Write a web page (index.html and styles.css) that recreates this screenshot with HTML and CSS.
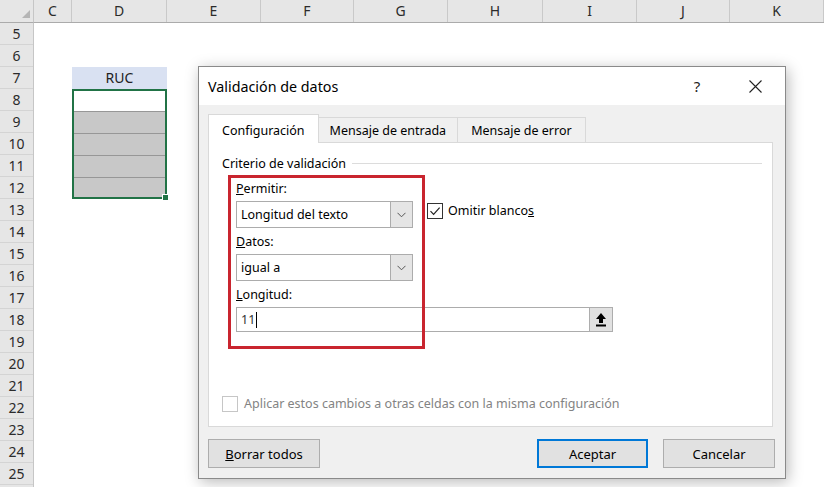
FILE: index.html
```html
<!DOCTYPE html>
<html lang="es">
<head>
  <meta charset="UTF-8">
  <title>Validación de datos</title>
  <link rel="stylesheet" href="styles.css">
</head>
<body>
<!-- hoja de cálculo de fondo -->
<div class="sheet">
  <div class="corner"><span class="corner-tri"></span></div>
  <div class="col-heads">
    <div>C</div><div>D</div><div>E</div><div>F</div><div>G</div><div>H</div><div>I</div><div>J</div><div>K</div>
  </div>
  <div class="row-heads">
    <div>5</div><div>6</div><div>7</div><div>8</div><div>9</div><div>10</div><div>11</div>
    <div>12</div><div>13</div><div>14</div><div>15</div><div>16</div><div>17</div><div>18</div>
    <div>19</div><div>20</div><div>21</div><div>22</div><div>23</div><div>24</div><div>25</div>
  </div>
  <div class="cells">
    <div class="ruc">RUC</div>
    <div class="sel">
      <div class="sel-cell first"></div>
      <div class="sel-cell"></div>
      <div class="sel-cell"></div>
      <div class="sel-cell"></div>
      <div class="sel-cell last"></div>
      <span class="handle"></span>
    </div>
  </div>
</div>

<!-- cuadro de diálogo -->
<div class="dialog">
  <div class="dlg-title">
    <span class="dlg-caption">Validación de datos</span>
    <span class="dlg-help">?</span>
    <span class="dlg-close">
      <svg width="13" height="13" viewBox="0 0 13 13"><path d="M0.5 0.5L12.5 12.5M12.5 0.5L0.5 12.5" stroke="#222" stroke-width="1.1" fill="none"/></svg>
    </span>
  </div>
  <div class="dlg-body">
    <div class="tabs">
      <div class="tab active">Configuración</div>
      <div class="tab">Mensaje de entrada</div>
      <div class="tab">Mensaje de error</div>
    </div>
    <div class="panel">
      <div class="group-head"><span>Criterio de validación</span><i class="group-line"></i></div>
      <div class="fields">
        <div class="lbl"><u>P</u>ermitir:</div>
        <div class="field-row">
          <div class="combo">
            <span class="combo-val">Longitud del texto</span>
            <span class="combo-btn"><svg width="9" height="6" viewBox="0 0 9 6"><path d="M0.5 0.8L4.5 4.8L8.5 0.8" stroke="#555" stroke-width="1" fill="none"/></svg></span>
          </div>
          <div class="check">
            <span class="box"><svg width="14" height="14" viewBox="0 0 14 14"><path d="M2.5 7.2L5.6 10.3L11.6 3.6" stroke="#222" stroke-width="1.2" fill="none"/></svg></span>
            <span>Omitir blanco<u>s</u></span>
          </div>
        </div>
        <div class="lbl"><u>D</u>atos:</div>
        <div class="combo">
          <span class="combo-val">igual a</span>
          <span class="combo-btn"><svg width="9" height="6" viewBox="0 0 9 6"><path d="M0.5 0.8L4.5 4.8L8.5 0.8" stroke="#555" stroke-width="1" fill="none"/></svg></span>
        </div>
        <div class="lbl"><u>L</u>ongitud:</div>
        <div class="textbox">
          <span class="tb-val">11<span class="caret"></span></span>
          <span class="ref-btn"><svg width="12" height="15" viewBox="0 0 12 15"><path d="M6 1L11 7H8V11H4V7H1Z" fill="#000"/><rect x="1" y="12.5" width="10" height="2" fill="#000"/></svg></span>
        </div>
      </div>
      <div class="apply"><span class="box off"></span><span>Aplicar estos cambios a otras celdas con la misma configuración</span></div>
      <div class="highlight"></div>
    </div>
    <div class="buttons">
      <button class="btn"><u>B</u>orrar todos</button>
      <span class="spacer"></span>
      <button class="btn default">Aceptar</button>
      <button class="btn">Cancelar</button>
    </div>
  </div>
</div>
</body>
</html>
```

FILE: styles.css
```css
body{margin:0;width:824px;height:487px;overflow:hidden;position:relative;background:#fff;font-family:"Noto Sans","Open Sans",Arial,sans-serif;color:#000}

/* ---------- hoja ---------- */
.sheet{display:grid;grid-template-columns:34px 790px;grid-template-rows:23px 464px}
.corner{position:relative;background:#e6e6e6;border-right:1px solid #c6c6c6;border-bottom:1px solid #ababab}
.corner-tri{position:absolute;right:3px;bottom:4px;width:0;height:0;border-left:8px solid transparent;border-bottom:8px solid #b5b5b5}
.col-heads{display:grid;grid-template-columns:38px 95px 94px 93px 94px 95px 94px 93px 94px;background:#e6e6e6;border-bottom:1px solid #ababab}
.col-heads div{border-right:1px solid #c9c9c9;text-align:center;font-size:14px;line-height:22px;color:#2b2b2b}
.row-heads{display:grid;grid-auto-rows:22px;align-content:start;background:#e6e6e6;border-right:1px solid #c6c6c6}
.row-heads div{box-sizing:border-box;border-bottom:1px solid #d4d4d4;text-align:center;font-size:14px;line-height:21px;color:#2b2b2b}
.cells{display:grid;grid-template-columns:38px 95px 94px 93px 94px 95px 94px 93px 94px;grid-template-rows:repeat(21,22px)}
.ruc{grid-column:2;grid-row:3;background:#d9e1f2;text-align:center;font-size:14px;line-height:22px;color:#222}
.sel{grid-column:2;grid-row:4/span 5;position:relative;box-sizing:border-box;border:2px solid #217346;display:flex;flex-direction:column}
.sel-cell{height:22px;box-sizing:border-box;background:#c8c8c8;border-top:1px solid #979797}
.sel-cell.first{height:20px;background:#fff;border-top:none}
.sel-cell.last{height:20px}
.handle{position:absolute;right:-4px;bottom:-4px;width:5px;height:5px;background:#217346;border:1px solid #fff}

/* ---------- diálogo ---------- */
.dialog{position:absolute;left:198px;top:66px;width:588px;height:413px;box-sizing:border-box;border:1px solid #8a8a8a;background:#f0f0f0;box-shadow:2px 3px 14px rgba(0,0,0,.28);display:flex;flex-direction:column;font-size:12.5px}
.dlg-title{flex:none;height:38px;background:#fff;display:flex;align-items:center;padding-left:9px}
.dlg-caption{flex:1;font-size:14.3px}
.dlg-help{width:56px;text-align:center;font-size:15px;color:#222}
.dlg-close{width:60px;display:flex;justify-content:center}
.dlg-body{flex:1;display:flex;flex-direction:column;padding:9px 10px 10px 9px}

.tabs{display:flex;align-items:flex-end;height:28px;position:relative;z-index:1}
.tab{box-sizing:border-box;height:25px;padding:4px 11px 0;border:1px solid #d9d9d9;border-bottom:none;margin-right:-1px;background:#f0f0f0;line-height:17px}
.tab:last-child{padding:4px 13px 0}
.tab.active{height:29px;margin-bottom:-1px;padding:7px 13px 0;background:#fff}

.panel{flex:none;height:285px;margin-right:2px;box-sizing:border-box;background:#fff;border:1px solid #d9d9d9;position:relative;display:flex;flex-direction:column;padding:12px 10px 14px 13px}
.group-head{display:flex;align-items:center;gap:6px;line-height:17px}
.group-line{flex:1;height:1px;background:#dcdcdc}
.fields{margin-left:14px;display:flex;flex-direction:column;align-items:flex-start}
.lbl{line-height:16px;margin-top:6px;margin-bottom:4px}
.group-head + .fields .lbl:first-child{margin-top:9px}
.field-row{display:flex;align-items:flex-start}
.combo{width:177px;height:27px;box-sizing:border-box;border:1px solid #acacac;background:#fff;display:flex}
.combo-val{flex:1;padding-left:4px;line-height:25px}
.combo-btn{width:21px;border-left:1px solid #acacac;background:#e5e5e5;display:flex;align-items:center;justify-content:center}
.check{display:flex;align-items:center;gap:5px;margin:2px 0 0 14px;line-height:16px}
.box{width:16px;height:16px;box-sizing:border-box;border:1px solid #333;background:#fff;display:flex;align-items:center;justify-content:center}
.box.off{border-color:#c6c6c6}
.textbox{width:377px;height:25px;box-sizing:border-box;border:1px solid #acacac;background:#fff;display:flex}
.tb-val{flex:1;padding-left:4px;line-height:23px;display:flex;align-items:center;color:#333}
.caret{width:1px;height:16px;background:#000;margin-left:1px}
.ref-btn{width:24px;box-sizing:border-box;border:1px solid #adadad;margin:-1px -1px -1px 0;background:#e1e1e1;display:flex;align-items:center;justify-content:center}
.apply{margin-top:auto;display:flex;align-items:center;gap:6px;color:#838383;line-height:16px}
.highlight{position:absolute;left:19px;top:32px;width:197px;height:174px;box-sizing:border-box;border:3px solid #c9252f}

.buttons{display:flex;gap:15px;margin-top:12px}
.spacer{flex:1}
.btn{width:112px;height:29px;padding:0;border:1px solid #adadad;background:#e1e1e1;font:inherit;font-size:13px;color:#000}
.btn.default{width:111px;border:2px solid #0078d7}
```
